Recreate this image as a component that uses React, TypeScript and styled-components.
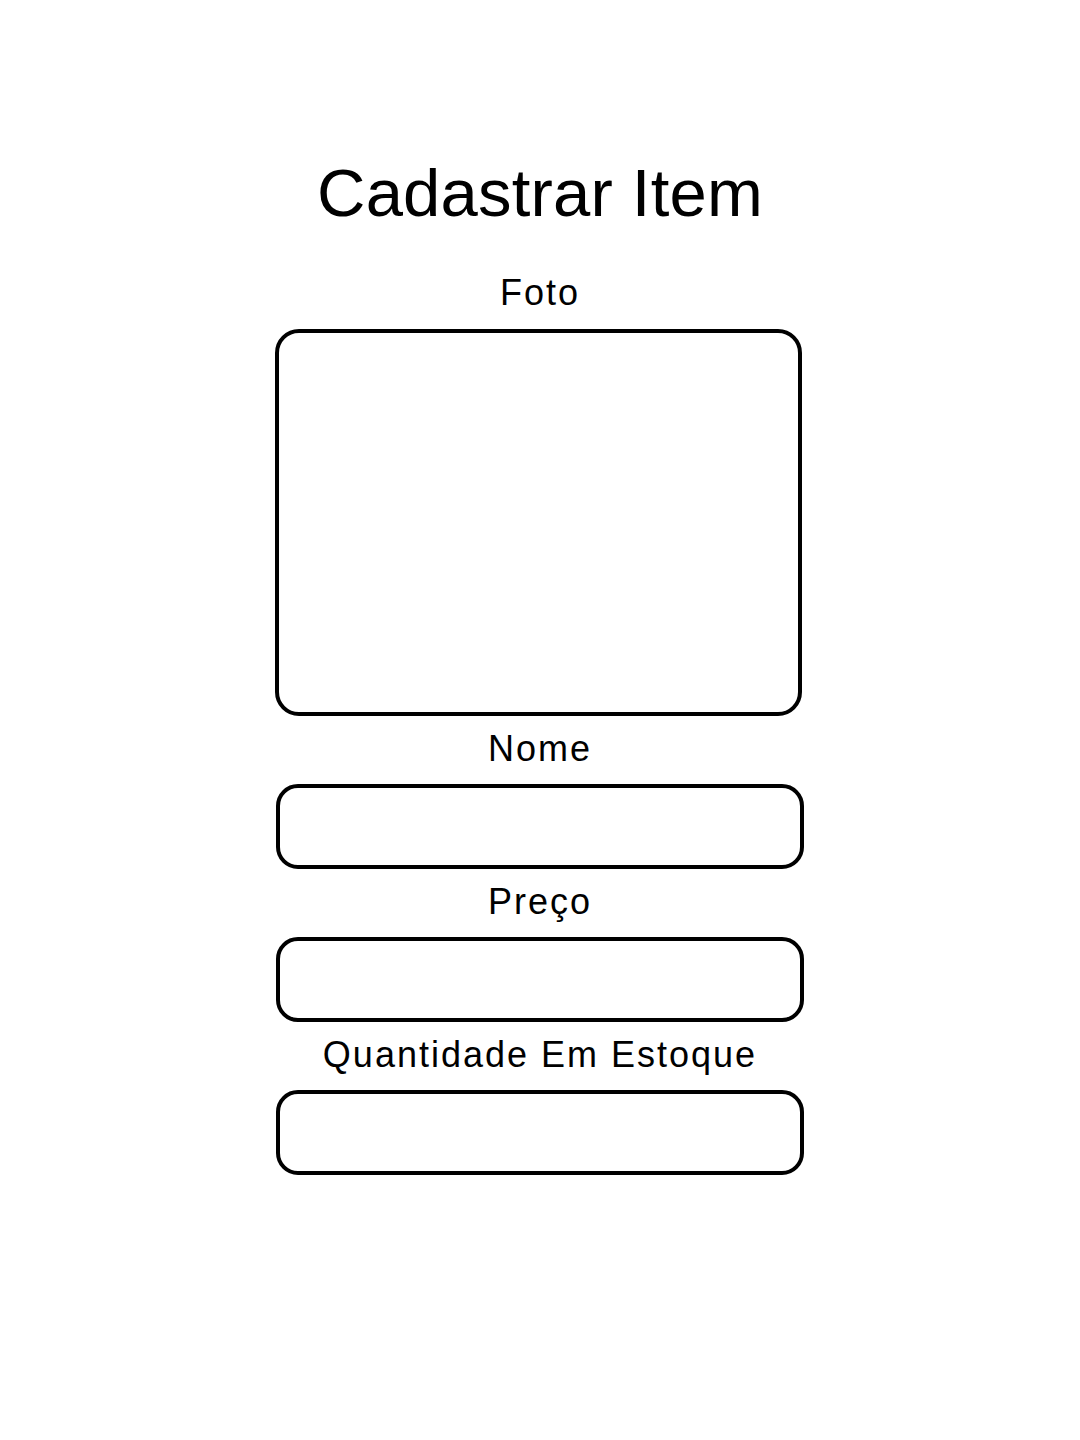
import React from "react";
import styled, { createGlobalStyle } from "styled-components";

const GlobalStyle = createGlobalStyle`
  html, body {
    margin: 0;
    padding: 0;
    background: #ffffff;
  }
  body {
    font-family: "Liberation Sans", Arial, sans-serif;
    color: #000000;
  }
  * { box-sizing: border-box; }
`;

const Page = styled.main`
  display: flex;
  flex-direction: column;
  align-items: center;
  padding-top: 155px;
  min-height: 1440px;
`;

const Title = styled.h1`
  margin: 0 0 43px;
  font-family: "Liberation Sans", Arial, sans-serif;
  font-weight: 400;
  font-size: 67px;
  line-height: 75px;
  letter-spacing: 0.2px;
  color: #000;
`;

const Form = styled.form`
  display: flex;
  flex-direction: column;
  align-items: center;
  gap: 13px;
`;

const Field = styled.div`
  display: flex;
  flex-direction: column;
  align-items: center;
`;

const Label = styled.label<{ $gap: number }>`
  font-family: "Liberation Sans", Arial, sans-serif;
  font-size: 36px;
  line-height: 40px;
  letter-spacing: 2px;
  color: #000;
  margin-bottom: ${(p) => p.$gap}px;
`;

const PhotoBox = styled.div`
  width: 527px;
  height: 387px;
  border: 4px solid #000;
  border-radius: 24px;
  margin-right: 3px;
  background: #fff;
`;

const Input = styled.input`
  display: block;
  width: 528px;
  height: 85px;
  border: 4px solid #000;
  border-radius: 22px;
  background: #fff;
  padding: 0 20px;
  font-family: "Liberation Sans", Arial, sans-serif;
  font-size: 30px;
  outline: none;
`;

const fields = [
  { id: "nome", label: "Nome" },
  { id: "preco", label: "Preço" },
  { id: "quantidade", label: "Quantidade Em Estoque" },
];

export default function App() {
  return (
    <>
      <GlobalStyle />
      <Page>
        <Title>Cadastrar Item</Title>
        <Form onSubmit={(e) => e.preventDefault()}>
          <Field>
            <Label $gap={16}>Foto</Label>
            <PhotoBox />
          </Field>
          {fields.map((f) => (
            <Field key={f.id}>
              <Label htmlFor={f.id} $gap={15}>
                {f.label}
              </Label>
              <Input id={f.id} type="text" />
            </Field>
          ))}
        </Form>
      </Page>
    </>
  );
}
